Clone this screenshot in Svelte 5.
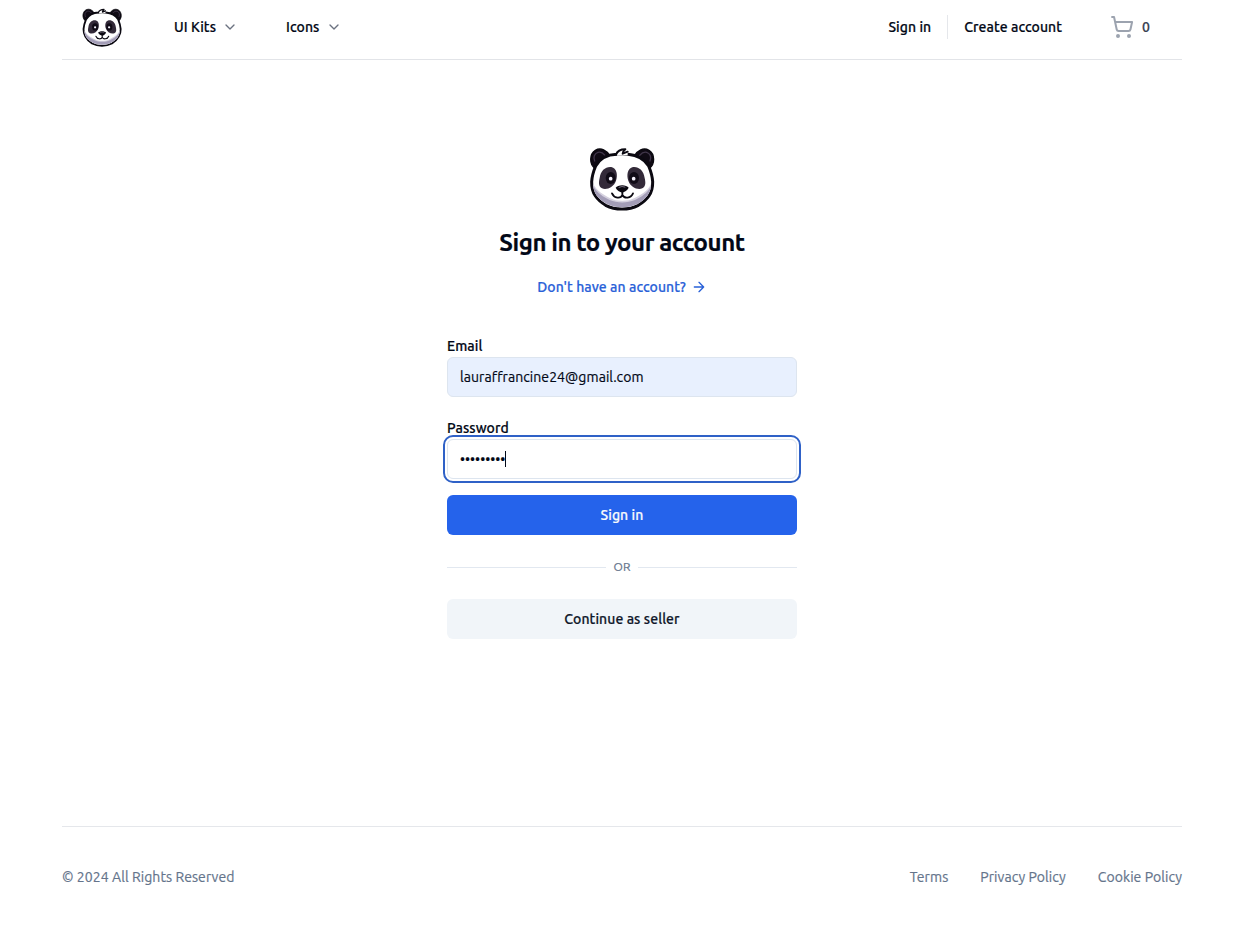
<script>
  const menus = [
    { name: 'UI Kits', cls: 'kits' },
    { name: 'Icons', cls: 'icons' }
  ];
  const legal = ['Terms', 'Privacy Policy', 'Cookie Policy'];
</script>

{#snippet panda(size)}
  <svg class="panda {size}" viewBox="28 20 196 192" aria-label="Panda logo">
    <path d="M46 85C27 73 28 41 46 30C63 20 81 31 89 46M207 85C226 73 225 41 207 30C190 20 172 31 164 46" fill="#0f0a14" stroke="#09070e" stroke-width="4" />
    <path d="M44 62C39 52 43 39 54 36C61 34 69 38 75 45M210 62C215 52 211 39 200 36C193 34 185 38 179 45" fill="none" stroke="#40364a" stroke-width="4" />
    <path d="M47 77C60 54 82 43 110 42Q127 40 144 42C174 45 194 57 206 77C213 94 217 106 218 124C219 161 200 179 175 195C146 210 106 210 77 195C52 179 34 160 35 124C36 106 40 94 47 77Z" fill="#fff" stroke="#0b0911" stroke-width="9" stroke-linejoin="round" />
    <path d="M109 43C113 33 123 28 135 28C130 32 128 36 129 40L143 35V45L112 46Z" fill="#fff" />
    <path d="M108 43C112 32 123 27 136 27C130 32 128 36 128 40L143 34" fill="none" stroke="#0b0911" stroke-width="6" stroke-linecap="round" stroke-linejoin="round" />
    <path d="M40 131C51 153 70 163 91 174C108 184 145 184 162 174C184 163 203 153 213 131C214 158 196 178 173 190C144 204 108 204 80 190C55 177 38 157 40 131Z" fill="#d5d1df" />
    <path d="M40 137C52 160 70 169 89 179C112 189 141 189 165 179C184 169 202 160 213 137C211 160 195 179 173 190C144 204 108 204 80 190C56 178 41 159 40 137Z" fill="#a39db7" />
    <path d="M59 113C62 90 77 78 94 80C110 83 114 104 108 121C102 140 80 150 66 144C55 138 56 126 59 113ZM194 113C191 90 176 78 159 80C143 83 139 104 145 121C151 140 173 150 187 144C198 138 197 126 194 113Z" fill="#332a39" />
    <ellipse cx="92" cy="113" rx="15" ry="18" fill="#100b16" />
    <ellipse cx="162" cy="113" rx="15" ry="18" fill="#100b16" />
    <circle cx="92" cy="115" r="5.5" fill="#f4f1fb" />
    <circle cx="161" cy="115" r="5.5" fill="#f4f1fb" />
    <path d="M107 142C113 132 140 132 146 142C143 150 133 155 127 157C119 154 110 150 107 142Z" fill="#0b0911" />
    <path d="M117 141Q126 136 135 140" fill="none" stroke="#777080" stroke-width="3" />
    <path d="M127 154V164C122 176 102 174 96 159M127 164C133 176 153 174 159 159" fill="none" stroke="#0b0911" stroke-width="5.5" stroke-linecap="round" stroke-linejoin="round" />
  </svg>
{/snippet}

<div class="page">
  <header>
    <a class="logo" href="#home">{@render panda('small')}</a>
    <nav class="menus">
      {#each menus as menu}
        <button class="menu {menu.cls}"><span>{menu.name}</span>
          <svg viewBox="0 0 24 24" width="16" height="16" class="chevron"><path d="m6 9 6 6 6-6" /></svg>
        </button>
      {/each}
    </nav>
    <div class="account">
      <a href="#signin">Sign in</a>
      <i></i>
      <a href="#create">Create account</a>
      <a class="cart" href="#cart">
        <svg viewBox="0 0 24 24" width="24" height="24"><circle cx="8" cy="21" r="1" /><circle cx="19" cy="21" r="1" /><path d="M2.05 2.05h2l2.66 12.42a2 2 0 0 0 2 1.58h9.78a2 2 0 0 0 1.95-1.57l1.65-7.43H5.12" /></svg>
        <span>0</span>
      </a>
    </div>
  </header>

  <main>
    {@render panda('large')}
    <h1>Sign in to your account</h1>
    <a class="register" href="#create"><span>Don't have an account?</span>
      <svg viewBox="0 0 24 24" width="16" height="16"><path d="M5 12h14M12 5l7 7-7 7" /></svg>
    </a>
    <form>
      <div class="label">Email</div>
      <div class="field email"><span>lauraffrancine24@gmail.com</span></div>
      <div class="label second">Password</div>
      <div class="field password"><span>•••••••••</span><b></b></div>
      <button type="button" class="submit">Sign in</button>
      <div class="or"><span>OR</span></div>
      <button type="button" class="seller">Continue as seller</button>
    </form>
  </main>

  <footer>
    <span>© 2024 All Rights Reserved</span>
    <nav>
      {#each legal as item}<a href="#legal">{item}</a>{/each}
    </nav>
  </footer>
</div>

<style>
  :global(body) { margin: 0; background: #fff; }
  * { box-sizing: border-box; }
  .page { width: 1120px; height: 926px; margin-left: 62px; display: flex; flex-direction: column; font: 500 14px/20px Ubuntu, "Noto Sans", sans-serif; letter-spacing: .07px; -webkit-text-stroke: .2px; color: #020817; white-space: nowrap; }
  a { color: inherit; text-decoration: none; }
  button { font: inherit; letter-spacing: inherit; color: inherit; border: 0; background: none; padding: 0; white-space: nowrap; }
  svg { display: block; flex: none; fill: none; stroke: currentColor; stroke-width: 2; stroke-linecap: round; stroke-linejoin: round; }
  .panda { stroke: none; }
  .small { width: 40px; height: 39px; }
  .large { width: 66px; height: 64px; }
  header { height: 60px; flex: none; display: flex; align-items: flex-start; border-bottom: 1px solid #e2e4e8; padding: 0 32px 0 20px; }
  .logo { padding-top: 8px; }
  .menus { display: flex; margin-left: 52px; height: 54px; }
  .menu { display: flex; align-items: center; justify-content: space-between; width: 64px; margin-right: 48px; }
  .icons { width: 56px; }
  .chevron { color: #6b7280; }
  .account { margin-left: auto; height: 54px; display: flex; align-items: center; }
  .account i { width: 1px; height: 24px; background: #e5e7eb; margin: 0 16px; }
  .cart { display: flex; align-items: center; margin-left: 48px; gap: 8px; color: #9ca3af; }
  .cart span { color: #374151; }
  main { flex: 1; display: flex; flex-direction: column; align-items: center; padding-top: 87px; }
  h1 { margin: 16px 0 0; font-size: 24px; line-height: 32px; font-weight: 700; letter-spacing: -.45px; }
  .register { display: flex; align-items: center; margin-top: 18px; height: 20px; gap: 5px; color: #2961d8; }
  form { width: 350px; margin-top: 39px; }
  .label { height: 21px; line-height: 20px; }
  .second { margin-top: 21px; }
  .field { height: 40px; border: 1px solid #dde5ef; border-radius: 6px; padding: 0 12px; display: flex; align-items: center; font-weight: 400; }
  .email { background: #e8f0fe; }
  .password { outline: 2px solid #2f61c7; outline-offset: 2px; letter-spacing: 0; }
  .password b { width: 1px; height: 16px; background: #020817; }
  .submit, .seller { width: 100%; height: 40px; border-radius: 6px; display: block; }
  .submit { margin-top: 16px; background: #2563eb; color: #f8fafc; }
  .or { display: flex; align-items: center; gap: 8px; height: 16px; margin: 24px 0; font-size: 12px; font-weight: 400; color: #64748b; }
  .or::before, .or::after { content: ''; flex: 1; height: 1px; background: #e2e8f0; }
  .seller { background: #f1f5f9; color: #0f172a; }
  footer { height: 100px; flex: none; border-top: 1px solid #e5e7eb; padding-top: 40px; display: flex; justify-content: space-between; font-weight: 400; color: #64748b; }
  footer nav { display: flex; gap: 32px; }
</style>
